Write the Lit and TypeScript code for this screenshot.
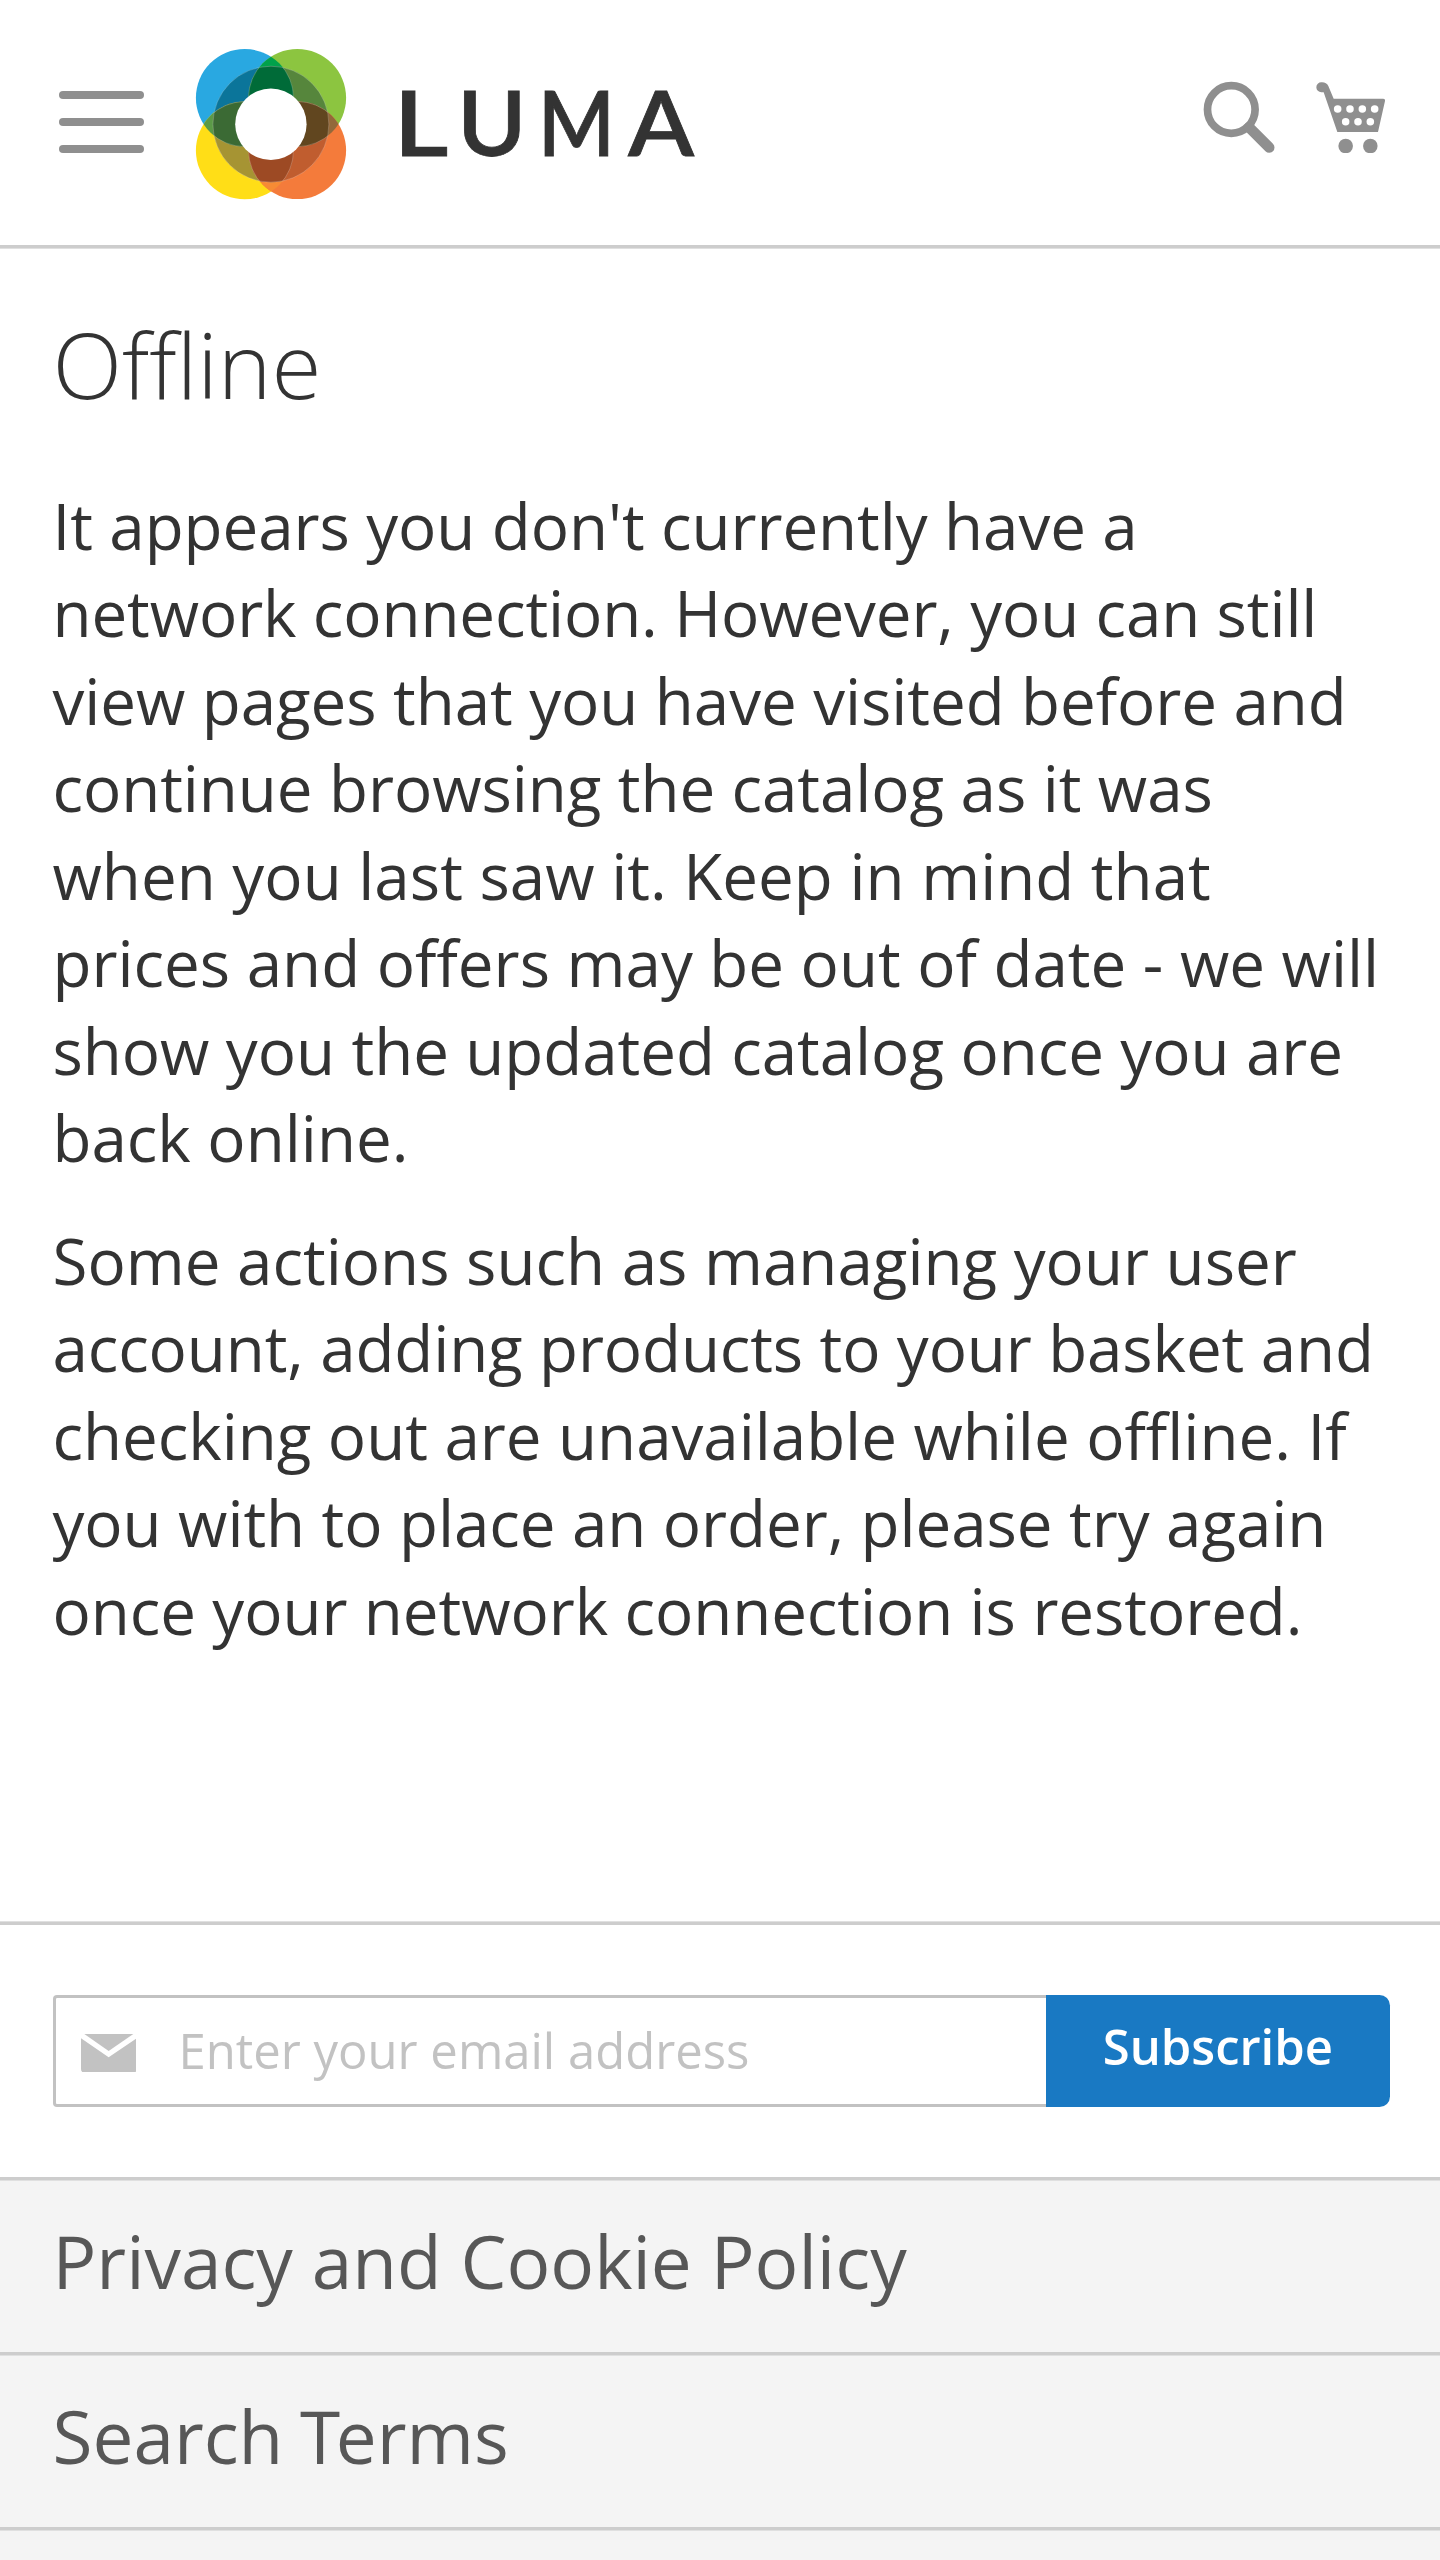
import { LitElement, html, css, svg } from "lit";
import { customElement } from "lit/decorators.js";

const C = { blue: [48.7, 48.8], green: [101.3, 48.8], yellow: [48.7, 101.4], orange: [101.3, 101.3] } as const;
const R = 48.8;

// Letter, x origin and horizontal scale of the wordmark.
const WORD: [string, number, number][] = [["L", 197.4, 1.17], ["U", 261.3, 1.033], ["M", 342, 0.906], ["A", 431.9, 1.063]];

// Lines of copy with their tracking in pixels.
const INTRO: [string, number][] = [
  ["It appears you don't currently have a", -0.06],
  ["network connection. However, you can still", -0.11],
  ["view pages that you have visited before and", -0.05],
  ["continue browsing the catalog as it was", -0.06],
  ["when you last saw it. Keep in mind that", 0.02],
  ["prices and offers may be out of date - we will", 0],
  ["show you the updated catalog once you are", -0.05],
  ["back online.", 0],
];
const DETAIL: [string, number][] = [
  ["Some actions such as managing your user", 0.01],
  ["account, adding products to your basket and", -0.1],
  ["checking out are unavailable while offline. If", -0.02],
  ["you with to place an order, please try again", -0.05],
  ["once your network connection is restored.", -0.07],
];

@customElement("luma-logo")
class LumaLogo extends LitElement {
  static styles = css`
    :host { display: block; width: 520px; height: 151px; }
    .logo { display: block; overflow: visible; }
    .seam { fill: none; stroke: #fff; stroke-opacity: 0.3; stroke-width: 0.7; }
    .word { font-family: Lato, "Open Sans", sans-serif; font-weight: 600; font-size: 90.6px; fill: #333; stroke: #333; stroke-width: 0.8px; }
  `;
  private clip(id: keyof typeof C) {
    return svg`<clipPath id=${id}><circle cx=${C[id][0]} cy=${C[id][1]} r=${R} /></clipPath>`;
  }
  private disc(id: keyof typeof C, fill: string) {
    return svg`<circle cx=${C[id][0]} cy=${C[id][1]} r=${R} fill=${fill} />`;
  }
  private lens(a: keyof typeof C, b: keyof typeof C, fill: string) {
    return svg`<g clip-path="url(#${a})"><circle cx=${C[b][0]} cy=${C[b][1]} r=${R} fill=${fill} /></g>`;
  }
  render() {
    return html`<svg class="logo" width="520" height="151" viewBox="0 0 520 151" role="img" aria-label="Luma">
      <defs>
        ${(Object.keys(C) as (keyof typeof C)[]).map((k) => this.clip(k))}
        <clipPath id="ring"><circle cx="74.9" cy="75.2" r="58" /></clipPath>
      </defs>
      ${this.disc("blue", "#29a8e1")}${this.disc("green", "#8cc540")}
      ${this.disc("yellow", "#ffde17")}${this.disc("orange", "#f47b3b")}
      ${this.lens("blue", "green", "#00a14b")}${this.lens("blue", "yellow", "#5b9a47")}
      ${this.lens("green", "orange", "#93683a")}${this.lens("yellow", "orange", "#f78b34")}
      <g clip-path="url(#ring)">
        ${this.disc("blue", "#0b759a")}${this.disc("green", "#56863c")}
        ${this.disc("yellow", "#a69433")}${this.disc("orange", "#c05d2f")}
        ${this.lens("blue", "green", "#006b38")}${this.lens("blue", "yellow", "#3b6a34")}
        ${this.lens("green", "orange", "#61461f")}${this.lens("yellow", "orange", "#9d4a24")}
      </g>
      ${(Object.keys(C) as (keyof typeof C)[]).map((a) =>
        svg`<g clip-path="url(#ring)"><circle class="seam" cx=${C[a][0]} cy=${C[a][1]} r=${R} /></g>`)}
      <circle class="seam" cx="74.9" cy="75.2" r="58" />
      <circle cx="74.9" cy="75.2" r="35.7" fill="#fff" />
      ${WORD.map(([ch, x, s]) => svg`<text class="word" transform="translate(${x} 106.8) scale(${s} 1)">${ch}</text>`)}
    </svg>`;
  }
}

@customElement("app-root")
class AppRoot extends LitElement {
  static styles = css`
    :host {
      display: flex; flex-direction: column; width: 1440px; height: 2560px; overflow: hidden;
      background: #fff; color: #333; font-family: "Open Sans", "Noto Sans", sans-serif;
    }
    * { box-sizing: border-box; }
    .rule { flex: none; height: 4px; background: linear-gradient(#cdcdcd 3px, #e0e0e0 3px); }
    .rule-soft { background: linear-gradient(#e0e0e0 1px, #cdcdcd 1px); }
    .header { flex: none; height: 245px; display: flex; align-items: flex-start; padding-left: 58.7px; }
    .menu { margin-top: 91px; width: 85.3px; display: flex; flex-direction: column; gap: 19px; }
    .bar { height: 8px; border-radius: 4px; background: #8f8f8f; }
    .brand { margin: 49.2px auto 0 52px; }
    .search { display: block; margin-top: 81px; margin-right: 40px; }
    .cart { display: block; margin-top: 81.67px; margin-right: 54.67px; }
    .main { flex: none; height: 1672px; padding: 64.7px 52.5px 0; }
    .title { margin: 0; font-size: 91px; line-height: 100px; font-weight: 300; }
    .text { margin: 0 0 35px; font-size: 63.7px; line-height: 87.5px; }
    .line { display: block; white-space: nowrap; font-variant-ligatures: common-ligatures; }
    .title + .text { margin-top: 68.3px; }
    .newsletter { flex: none; height: 252px; padding: 70px 50.4px 0 52.5px; display: flex; }
    .field {
      flex: 1; height: 112px; display: flex; align-items: center; border: 3px solid #c2c2c2; border-right: 0;
      border-radius: 4px 0 0 4px; padding-left: 25.2px; font-size: 49px; line-height: 68px; color: #c2c2c2;
    }
    .mail { display: block; margin-top: 4px; }
    .placeholder { margin-left: 42.2px; margin-top: -2px; }
    .subscribe {
      width: 343.5px; height: 112px; padding: 0 0 10px; border: 0; border-radius: 0 10.5px 10.5px 0; background: #1979c3; color: #fff;
      font: 600 49px/56px "Open Sans", sans-serif;
    }
    .links { flex: 1; background: #f4f4f4; }
    .link { height: 171px; padding: 29.6px 52.5px 0; font-size: 72.9px; line-height: 100px; color: #575757; white-space: nowrap; }
    .kern-space { letter-spacing: -0.03em; }
    .kern { letter-spacing: -0.06em; }
  `;
  private lines(rows: [string, number][]) {
    return rows.map(([t, s]) => html`<span class="line" style="letter-spacing:${s}px">${t} </span>`);
  }
  render() {
    return html`
      <header class="header">
        <div class="menu"><div class="bar"></div><div class="bar"></div><div class="bar"></div></div>
        <luma-logo class="brand"></luma-logo>
        <svg class="search" width="73" height="73" viewBox="1203 81 73 73" fill="none" stroke="#8f8f8f">
          <circle cx="1231.3" cy="109.5" r="23.8" stroke-width="7.7" />
          <path d="M1249 127.2L1269.2 147.4" stroke-width="10.6" stroke-linecap="round" />
        </svg>
        <svg class="cart" width="69.33" height="71.67" viewBox="468 125 208 215" fill="#8f8f8f">
          <path d="M484 126Q499 125 505 137L521 175H669Q676 175 675 182L654 275H532L491 156H484A15 15 0 0 1 484 126Z" />
          <circle cx="557" cy="317" r="21.8" /><circle cx="631" cy="317" r="21.8" />
          <g fill="#fff">
            ${[533, 570, 607, 644].map((x) => svg`<circle cx=${x} cy="206" r="11.3" />`)}
            ${[557, 594, 631].map((x) => svg`<circle cx=${x} cy="244" r="11.3" />`)}
          </g>
        </svg>
      </header>
      <div class="rule"></div>
      <main class="main">
        <h1 class="title">Offline</h1>
        <p class="text">${this.lines(INTRO)}</p>
        <p class="text">${this.lines(DETAIL)}</p>
      </main>
      <div class="rule rule-soft"></div>
      <section class="newsletter">
        <div class="field">
          <svg class="mail" width="55.67" height="38.67" viewBox="242 402 167 116" fill="#c2c2c2">
            <path d="M252 402H399L325 453Z" />
            <path d="M242 415L325 472L409 415V507Q409 518 398 518H253Q242 518 242 507Z" />
          </svg>
          <span class="placeholder">Enter your email address</span>
        </div>
        <button class="subscribe">Subscribe</button>
      </section>
      <nav class="links">
        <div class="rule"></div>
        <div class="link">Privacy and Cookie Policy</div>
        <div class="rule"></div>
        <div class="link">Search<span class="kern-space"> </span><span class="kern">T</span>erms</div>
        <div class="rule"></div>
      </nav>`;
  }
}
